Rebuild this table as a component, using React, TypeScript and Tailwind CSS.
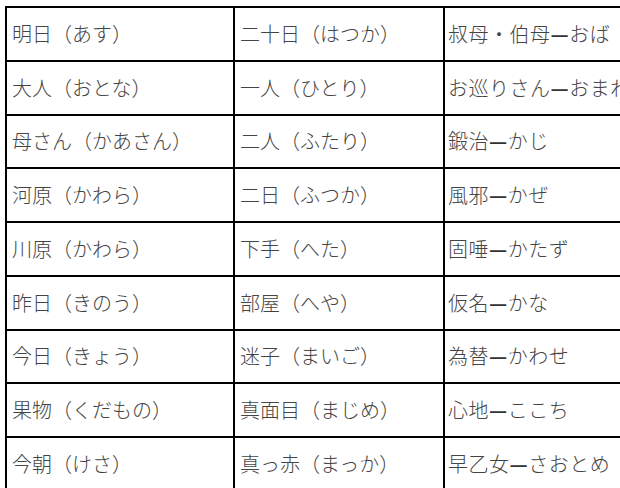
const rows: [string, string, string][] = [
  ["明日（あす）", "二十日（はつか）", "叔母・伯母—おば"],
  ["大人（おとな）", "一人（ひとり）", "お巡りさん—おまわりさん"],
  ["母さん（かあさん）", "二人（ふたり）", "鍛治—かじ"],
  ["河原（かわら）", "二日（ふつか）", "風邪—かぜ"],
  ["川原（かわら）", "下手（へた）", "固唾—かたず"],
  ["昨日（きのう）", "部屋（へや）", "仮名—かな"],
  ["今日（きょう）", "迷子（まいご）", "為替—かわせ"],
  ["果物（くだもの）", "真面目（まじめ）", "心地—ここち"],
  ["今朝（けさ）", "真っ赤（まっか）", "早乙女—さおとめ"],
];

// the reading column uses a heavy dash between word and kana
const Reading = ({ text }: { text: string }) => {
  const [word, kana] = text.split("—");
  return (
    <>
      {word}
      <span className="font-bold text-[#333]">—</span>
      {kana}
    </>
  );
};

const App = () => {
  return (
    <div className="h-[488px] w-[620px] overflow-hidden bg-white">
      <div
        className="ml-[5px] mt-[6px] grid w-[680px] grid-cols-[228px_210px_240px] auto-rows-[53.75px] border-l-2 border-t-2 border-black text-[20px] font-light text-[#444]"
        style={{ fontFamily: '"Noto Sans CJK JP", "Noto Sans", sans-serif' }}
      >
        {rows.map((row) =>
          row.map((cell, i) => (
            <div
              key={row[0] + i}
              className={`flex items-center overflow-hidden whitespace-nowrap border-b-2 border-r-2 border-black ${
                i === 2 ? "pl-[3px] tracking-[0.5px]" : "pl-[5px]"
              }`}
            >
              {i === 2 ? <Reading text={cell} /> : cell}
            </div>
          ))
        )}
      </div>
    </div>
  );
};

export default App;
